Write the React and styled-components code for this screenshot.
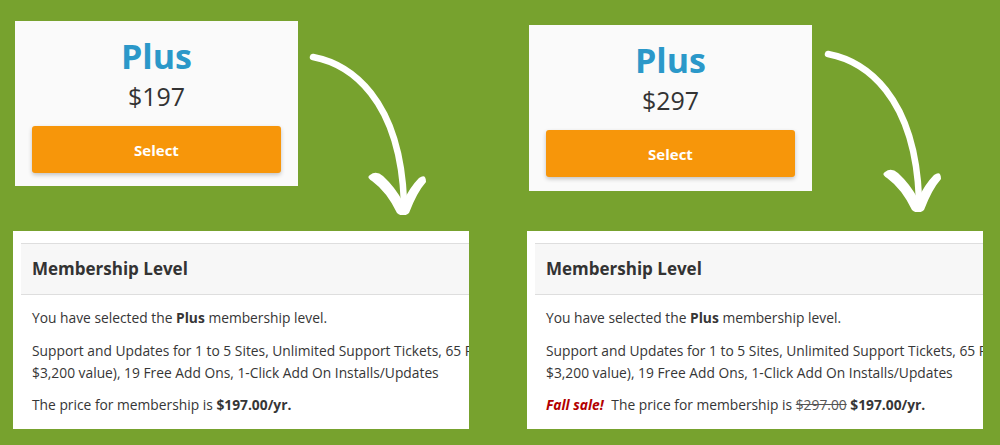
import React from "react";
import styled, { createGlobalStyle } from "styled-components";

const Global = createGlobalStyle`
  html, body { margin: 0; padding: 0; }
  body { font-family: "Open Sans", "Liberation Sans", sans-serif; }
`;

const Stage = styled.div`
  width: 1000px;
  height: 445px;
  background: #77a22e;
  display: grid;
  grid-template-columns: 500px 500px;
  overflow: hidden;
`;

const Column = styled.div`
  display: grid;
  grid-template-rows: 231px auto;
`;

const TopArea = styled.div`
  display: flex;
  align-items: flex-start;
  padding-top: ${(p) => p.$top}px;
  padding-left: ${(p) => p.$left}px;
`;

const PlanCard = styled.div`
  width: 283px;
  height: ${(p) => p.$h}px;
  box-sizing: border-box;
  background: #fafafa;
  display: flex;
  flex-direction: column;
  align-items: center;
  padding: 18px 17px 13px;
`;

const PlanName = styled.div`
  font-size: 34px;
  line-height: 34px;
  font-weight: 700;
  color: #2b98c9;
`;

const PlanPrice = styled.div`
  margin-top: 8px;
  font-size: 25px;
  line-height: 30px;
  color: #333;
`;

const SelectButton = styled.div`
  margin-top: 15px;
  width: 100%;
  height: 47px;
  border-radius: 3px;
  background: #f7960a;
  box-shadow: 0 2px 4px rgba(0, 0, 0, 0.22);
  display: flex;
  align-items: center;
  justify-content: center;
  color: #fff;
  font-size: 15px;
  font-weight: 700;
`;

const ArrowSvg = styled.svg`
  flex: none;
  margin-left: ${(p) => p.$dx}px;
  margin-top: ${(p) => p.$dy}px;
`;

const LevelCard = styled.div`
  width: 456px;
  height: 198px;
  margin-left: ${(p) => p.$left}px;
  background: #fff;
  overflow: hidden;
  box-sizing: border-box;
  padding: 12px 0 0 8px;
`;

const LevelHeader = styled.div`
  border-top: 1px solid #dedede;
  border-bottom: 1px solid #dedede;
  background: #f7f7f7;
  height: 50px;
  line-height: 50px;
  padding-left: 11px;
  font-size: 17px;
  font-weight: 700;
  color: #333;
  white-space: nowrap;
`;

const LevelBody = styled.div`
  padding: 12px 0 0 11px;
  font-size: 13.8px;
  line-height: 22px;
  color: #363636;
  white-space: nowrap;
`;

const Para = styled.p`
  margin: 0 0 ${(p) => p.$gap ?? 11}px;
`;

const Sale = styled.strong`
  font-style: italic;
  color: #b30000;
  margin-right: 4px;
`;

const Old = styled.span`
  text-decoration: line-through;
  color: #555;
`;

function Arrow({ dx, dy }) {
  return (
    <ArrowSvg width="140" height="175" viewBox="0 0 140 175" $dx={dx} $dy={dy}>
      <path
        d="M13 17 C 50 24, 100 58, 104 162"
        fill="none"
        stroke="#fff"
        strokeWidth="6.5"
        strokeLinecap="round"
      />
      <path
        d="M70 135 Q 76 130 83 136 Q 95 147 103 162 Q 110 147 119 138 Q 126 133 126 142 Q 117 152 109 173 Q 103 178 97 173 Q 87 152 72 141 Q 66 137 70 135 Z"
        fill="#fff"
      />
    </ArrowSvg>
  );
}

function Plan({ price, h }) {
  return (
    <PlanCard $h={h}>
      <PlanName>Plus</PlanName>
      <PlanPrice>{price}</PlanPrice>
      <SelectButton>Select</SelectButton>
    </PlanCard>
  );
}

function Level({ left, sale }) {
  return (
    <LevelCard $left={left}>
      <LevelHeader>Membership Level</LevelHeader>
      <LevelBody>
        <Para>
          You have selected the <strong>Plus</strong> membership level.
        </Para>
        <Para $gap={10}>
          Support and Updates for 1 to 5 Sites, Unlimited Support Tickets, 65 Premium Add Ons (a
          <br />
          $3,200 value), 19 Free Add Ons, 1-Click Add On Installs/Updates
        </Para>
        <Para>
          {sale ? (
            <>
              <Sale>Fall sale!</Sale> The price for membership is <Old>$297.00</Old>{" "}
              <strong>$197.00/yr.</strong>
            </>
          ) : (
            <>
              The price for membership is <strong>$197.00/yr.</strong>
            </>
          )}
        </Para>
      </LevelBody>
    </LevelCard>
  );
}

export default function App() {
  return (
    <>
      <Global />
      <Stage>
        <Column>
          <TopArea $top={21} $left={15}>
            <Plan price="$197" h={165} />
            <Arrow dx={2} dy={19} />
          </TopArea>
          <Level left={13} />
        </Column>
        <Column>
          <TopArea $top={25} $left={29}>
            <Plan price="$297" h={166} />
            <Arrow dx={3} dy={12} />
          </TopArea>
          <Level left={27} sale />
        </Column>
      </Stage>
    </>
  );
}
